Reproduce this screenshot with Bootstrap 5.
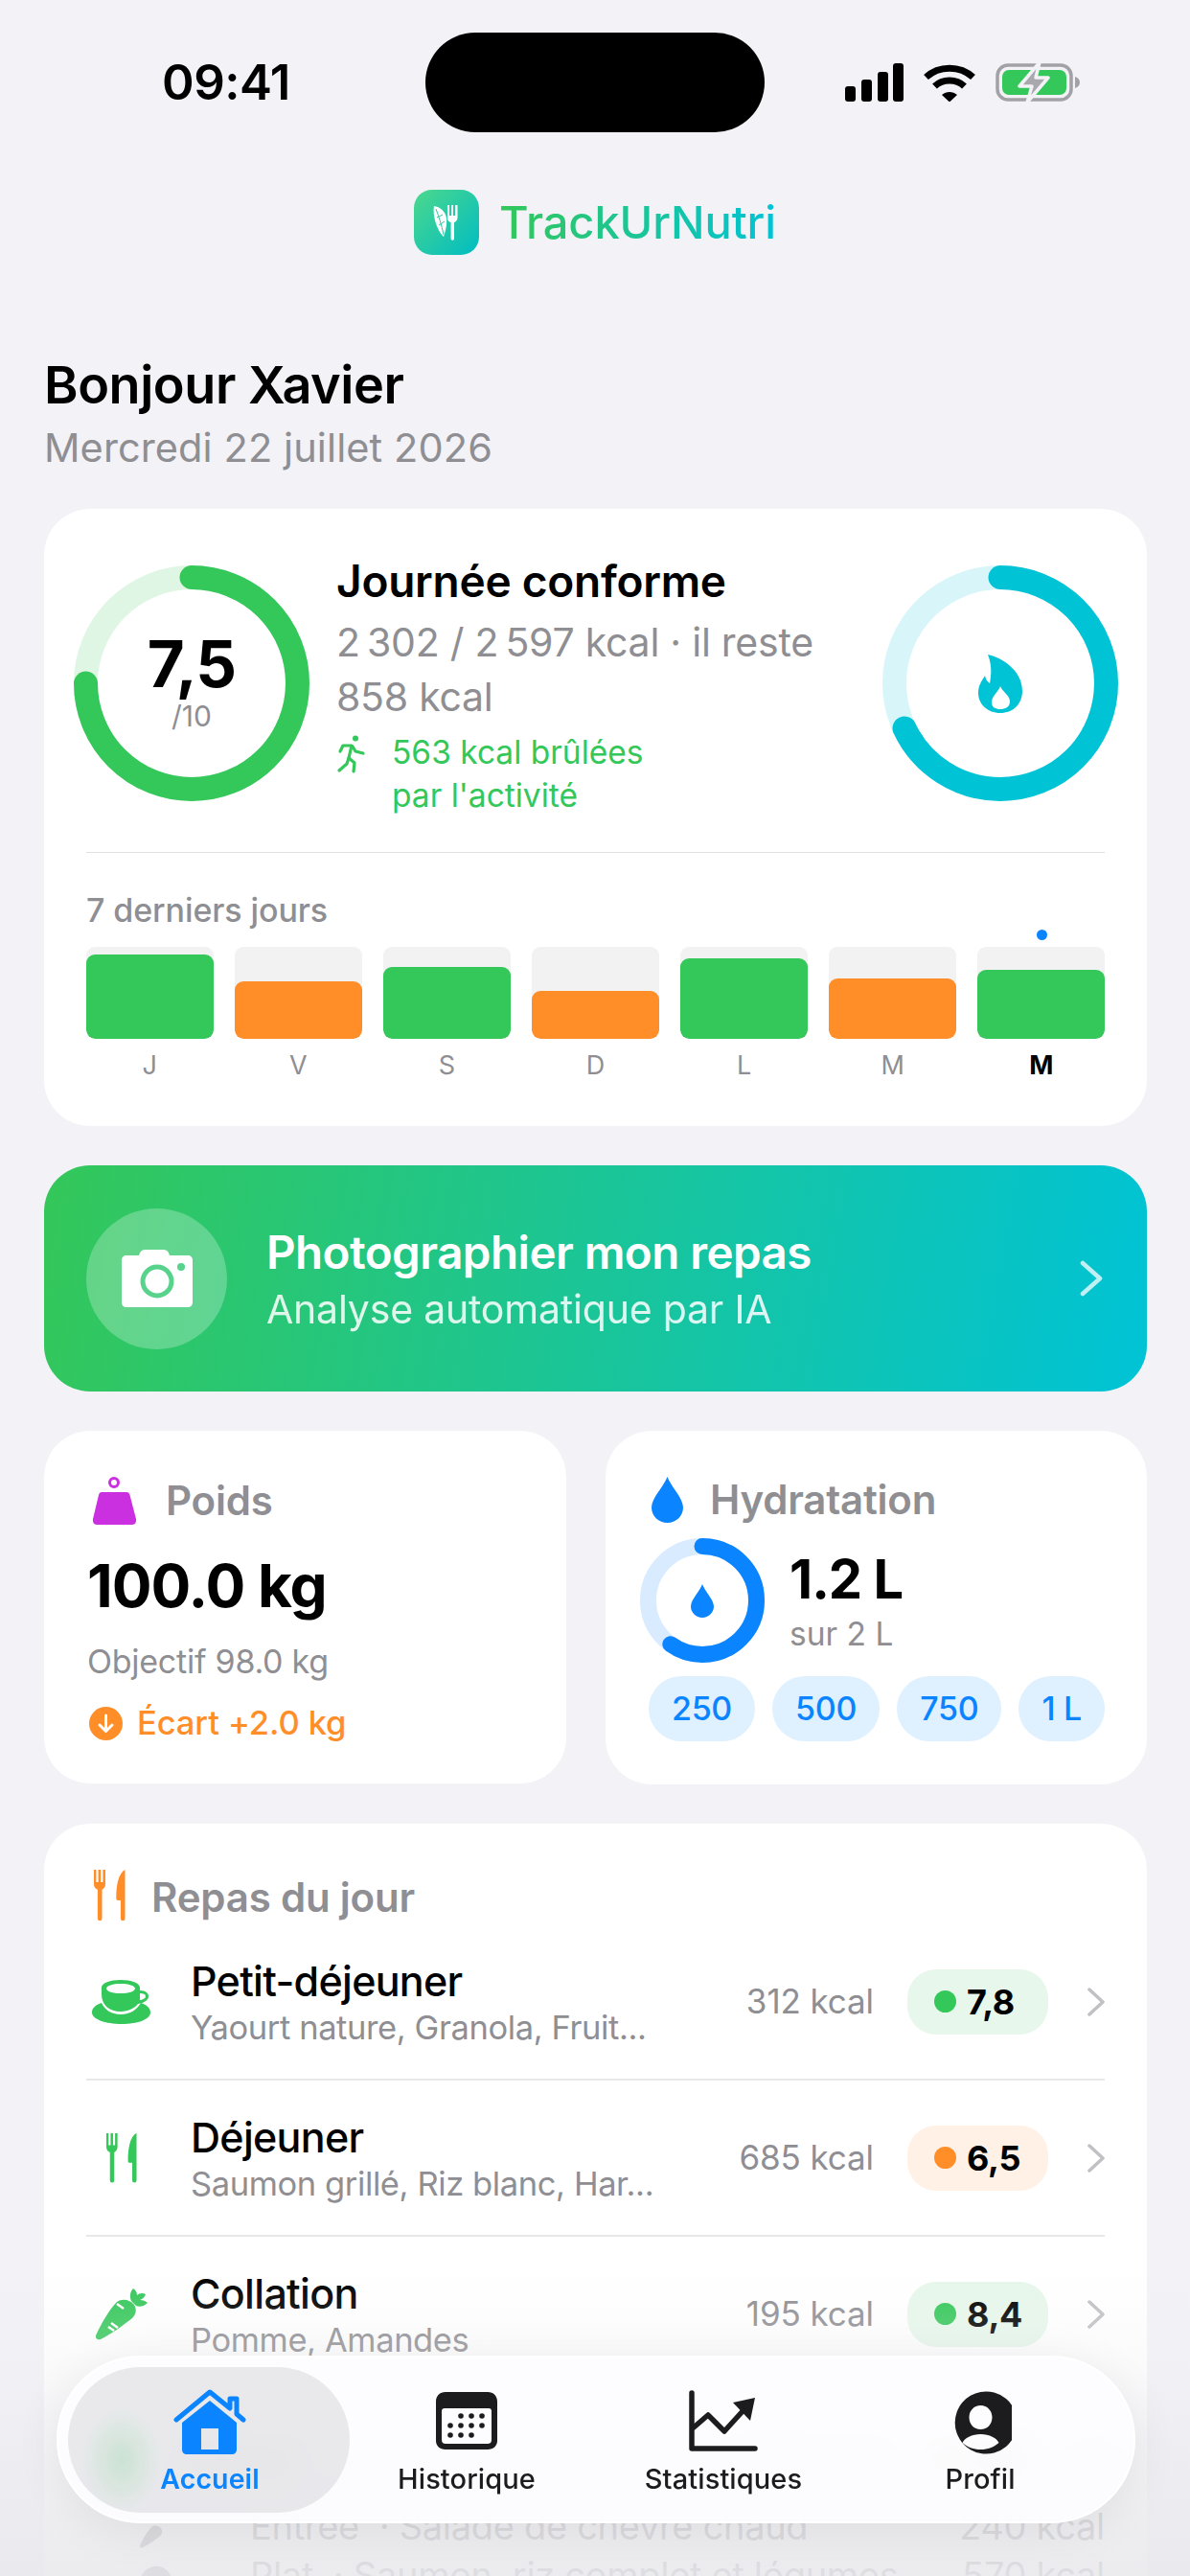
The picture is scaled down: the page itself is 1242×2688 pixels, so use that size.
<!DOCTYPE html>
<html lang="fr">
<head>
  <meta charset="UTF-8">
  <title>TrackUrNutri</title>
  <link href="https://cdn.jsdelivr.net/npm/bootstrap@5.3.0/dist/css/bootstrap.min.css" rel="stylesheet">
  <style>
    body { background: #f2f2f7; font-family: Inter, "Noto Sans", sans-serif; color: #000; margin: 0; }
    .screen { position: relative; width: 1242px; height: 2688px; overflow: hidden; background: #f2f2f7; }

    /* barre de statut */
    .statusbar { height: 138px; padding-top: 34px; }
    .clock { width: 444px; padding-left: 169px; font-size: 51px; font-weight: 600; line-height: 104px; letter-spacing: -.5px; }
    .island { width: 354px; height: 104px; background: #000; border-radius: 52px; }
    .status-icons { padding-left: 84px; gap: 21px; padding-top: 0; }

    .brand { margin-top: 60px; height: 68px; gap: 21px; }
    .brand-ico { width: 68px; height: 68px; border-radius: 19px; background: linear-gradient(135deg, #4cd88c, #00bcc2); }
    .brand-name { font-size: 47px; font-weight: 500; line-height: 68px; letter-spacing: -.1px;
      background: linear-gradient(90deg, #34c759, #00c3d6); -webkit-background-clip: text; background-clip: text; color: transparent; }

    .page { padding: 0 45px 0 46px; }
    .hello { margin-top: 103px; font-size: 54px; font-weight: 600; line-height: 66px; letter-spacing: -.45px; }
    .today { font-size: 41.500px; line-height: 56px; color: #8e8e93; margin-top: 4px; letter-spacing: .1px; }

    .tile { background: #fff; border: 0; border-radius: 48px; }

    /* carte du jour */
    .day-tile { margin-top: 36px; height: 644px; padding: 59px 30px 0 31px; }
    .day-head { height: 246px; }
    .day-text { margin-left: 28px; margin-top: -12px; }
    .day-title { font-size: 46px; font-weight: 600; line-height: 56px; letter-spacing: -.25px; }
    .day-sub { font-size: 41px; line-height: 57px; color: #8e8e93; margin-top: 8px; letter-spacing: -.25px; }
    .day-burn { color: #34c759; font-size: 33.500px; line-height: 45px; margin-top: 7px; gap: 26px; }
    .ring-num { font-size: 67px; font-weight: 700; line-height: 60px; letter-spacing: -1px; }
    .ring-den { font-size: 30px; line-height: 32px; color: #8e8e93; margin-top: 8px; }
    .ring-box { position: relative; width: 246px; height: 246px; flex: none; }
    .ring-mid { position: absolute; inset: 0; }
    .week { margin: 0 14px 0 13px; }
    .week-rule { height: 1px; background: #e0e0e3; margin-top: 53px; }
    .week-label { margin-top: 40px; font-size: 34px; font-weight: 500; line-height: 40px; color: #8e8e93; letter-spacing: -.1px; }
    .week-bars { margin-top: 18px; gap: 22.500px; }
    .day-col { position: relative; flex: 1 1 0; }
    .day-track { height: 96px; background: #f2f2f2; border-radius: 9px; overflow: hidden; }
    .day-fill { border-radius: 9px; }
    .fill-g { background: #34c759; }
    .fill-o { background: #ff8d28; }
    .day-letter { margin-top: 11px; font-size: 27px; line-height: 34px; color: #8e8e93; text-align: center; }
    .day-letter.now { color: #000; font-weight: 700; }
    .day-dot { position: absolute; top: -18px; left: 50%; margin-left: -5px; width: 11px; height: 11px; border-radius: 50%; background: #0a84ff; }

    /* bandeau photo */
    .snap { margin-top: 41px; height: 236px; border-radius: 48px; padding: 0 46px 0 44px; color: #fff;
      background: linear-gradient(100deg, #34c759 0%, #00c3d6 100%); }
    .snap-round { width: 147px; height: 147px; border-radius: 50%; background: rgba(255,255,255,.25); flex: none; }
    .snap-text { margin-left: 41px; }
    .snap-title { font-size: 47.500px; font-weight: 600; line-height: 58px; letter-spacing: -.55px; }
    .snap-sub { font-size: 41px; line-height: 50px; opacity: .85; margin-top: 5px; letter-spacing: -.2px; }

    /* poids + hydratation */
    .duo { margin-top: 41px; gap: 41px; }
    .weight-tile { width: 545px; height: 368px; padding: 48px 45px 0; }
    .water-tile { width: 565px; height: 369px; padding: 48px 44px 0 36px; }
    .tile-head { font-size: 42px; font-weight: 600; line-height: 48px; color: #8e8e93; letter-spacing: -.2px; }
    .weight-val { margin-top: 26px; font-size: 62px; font-weight: 700; line-height: 76px; letter-spacing: -1px; }
    .weight-goal { margin-top: 21px; font-size: 34px; line-height: 40px; color: #8e8e93; letter-spacing: -.25px; }
    .weight-gap { margin-top: 22px; font-size: 34.500px; font-weight: 500; line-height: 44px; color: #ff8d28; gap: 15px; letter-spacing: -.1px; }
    .water-ring { position: relative; width: 130px; height: 130px; flex: none; }
    .water-val { font-size: 56px; font-weight: 700; line-height: 66px; letter-spacing: -1px; }
    .water-of { font-size: 33.500px; line-height: 40px; color: #8e8e93; margin-top: 4px; }
    .chips { margin: 14px 0 0 9px; }
    .sip { height: 68px; padding: 0 24px; border-radius: 34px; background: #dff0ff; color: #0a84ff; font-size: 34px; font-weight: 500; line-height: 68px; letter-spacing: -.3px; }

    /* repas */
    .meals { margin-top: 41px; padding: 48px 44px 0; height: 900px; border-radius: 48px 48px 0 0; }
    .meals-head { height: 57px; }
    .meals-head .tile-head { margin-top: 5px; }
    .meal-row { height: 163px; border-bottom: 2px solid #e8e8ea; }
    .meal-row.last { border: 0; height: 117px; padding-top: 21px; }
    .meal-ico { width: 73px; margin-right: 36px; flex: none; }
    .meal-text { padding-top: 4px; }
    .meal-name { font-size: 43px; font-weight: 500; line-height: 50px; letter-spacing: -.7px; }
    .meal-items { font-size: 34.500px; line-height: 48px; color: #8e8e93; letter-spacing: -.4px; }
    .meal-kcal { margin-left: auto; font-size: 35px; color: #8e8e93; letter-spacing: -.1px; white-space: nowrap; }
    .score { width: 147px; height: 68px; margin-left: 35px; padding-left: 28px; gap: 11px; border-radius: 30px; font-size: 36px; font-weight: 700; letter-spacing: -.3px; flex: none; }
    .score-g { background: #e7f7eb; }
    .score-o { background: #fff1e6; }
    .score i { width: 23px; height: 23px; border-radius: 50%; display: block; }
    .score-g i { background: #34c759; }
    .score-o i { background: #ff8d28; }
    .go { margin-left: 41px; flex: none; }
    .sub-meal { margin-left: 56px; margin-top: -1px; font-size: 38px; line-height: 52px; color: #8e8e93; letter-spacing: -.3px; }
    .sub-meal.first { margin-top: -4px; }
    .sub-ico { width: 115px; flex: none; }

    /* fondu + barre d'onglets */
    .fade-bottom { position: absolute; left: 0; right: 0; top: 2370px; bottom: 0; z-index: 1; pointer-events: none;
      background: linear-gradient(180deg, rgba(240,240,243,0) 0%, rgba(240,240,243,.22) 24%, rgba(234,234,238,.8) 80%, rgba(233,233,237,.88) 100%); }
    .tabbar { position: absolute; z-index: 2; left: 59px; top: 2458px; width: 1126px; height: 175px; padding: 0 0 0 24px; border-radius: 88px;
      background: rgba(253,253,255,.92); border: 2px solid rgba(255,255,255,.9); box-shadow: 0 8px 50px rgba(0,0,0,.07);
      -webkit-backdrop-filter: blur(14px); backdrop-filter: blur(14px); }
    .tab { position: relative; width: 268px; height: 100%; font-size: 29px; font-weight: 500; color: #1c1c1e; letter-spacing: .1px; }
    .tab .tab-ico { height: 70px; margin-top: 33px; z-index: 1; position: relative; }
    .tab .tab-txt { line-height: 34px; margin-top: 7px; z-index: 1; position: relative; }
    .tab.on { color: #0a84ff; font-weight: 600; font-size: 28.500px; }
    .tab.on::before { content: ""; position: absolute; left: -14px; right: -12px; top: 10px; height: 152px; border-radius: 76px;
      background: radial-gradient(ellipse 42px 56px at 19% 64%, rgba(52,199,89,.16), rgba(52,199,89,0) 100%), rgba(120,120,128,.15); }
  </style>
</head>
<body>
<svg width="0" height="0" class="position-absolute">
  <symbol id="cutlery" viewBox="0 0 34 54">
    <path d="M1 0h2.400v13H5.600V0h2.600v13h2.200V0H13v15c0 3.200-1.800 5-3.500 5.800V51a2.300 2.300 0 0 1-4.600 0V20.800C2.800 20 1 18.200 1 15Z"/>
    <path d="M33.500 0v51a2.300 2.300 0 0 1-4.600 0V32h-2.600c-1.300 0-2-.8-2-2C24.300 16 26.500 4 33.500 0Z"/>
  </symbol>
</svg>

<div class="screen">
  <div class="statusbar d-flex">
    <div class="clock">09:41</div>
    <div class="island"></div>
    <div class="status-icons d-flex align-items-center">
      <svg width="61" height="40" viewBox="0 0 61 40"><rect x="0" y="24" width="11" height="16" rx="3"/><rect x="17" y="17" width="11" height="23" rx="3"/><rect x="34" y="9" width="11" height="31" rx="3"/><rect x="50" y="0" width="11" height="40" rx="3"/></svg>
      <svg width="54" height="40" viewBox="0 0 54 40" fill="none" stroke="#000" stroke-width="7"><path d="M2.500 14.500C16 2 38 2 51.500 14.500"/><path d="M11.500 24C20 16 34 16 42.500 24"/><path d="M19 33c4.500-4 11.500-4 16 0l-8 7.500Z" fill="#000" stroke="none"/></svg>
      <svg width="88" height="44" viewBox="0 0 88 44"><rect x="2" y="4" width="77" height="36" rx="11" fill="none" stroke="#a1a1a6" stroke-width="3.500"/><rect x="7" y="9" width="67" height="26" rx="7" fill="#34c759"/><path d="M83 16c3 1 5 3 5 6s-2 5-5 6Z" fill="#a1a1a6"/><path d="M46 1 25 26h13l-5 17 22-26H42Z" fill="#a8a8ad" stroke="#f2f2f7" stroke-width="3.500" stroke-linejoin="round"/></svg>
    </div>
  </div>

  <div class="brand d-flex justify-content-center align-items-center">
    <div class="brand-ico d-flex align-items-center justify-content-center">
      <svg width="28" height="38" viewBox="0 0 28 38"><path d="M1 2c6 1 12 5 13 13 .6 7-1 13-3 19C5 29-1 13 1 2Z" fill="#fff"/><path d="M3 5c3 8 6 17 8 27M4 14l6-3M6 22l6-4" stroke="#2ec9a2" stroke-width="1" fill="none"/><path d="M15 1h2v11h2V1h2v11h2V1h2.500v13c0 3-2 4.500-3.500 5v17a1.700 1.700 0 0 1-3.400 0V19C16.500 18.500 15 17 15 14Z" fill="#fff"/></svg>
    </div>
    <div class="brand-name">TrackUrNutri</div>
  </div>

  <div class="page">
    <div class="hello">Bonjour Xavier</div>
    <div class="today">Mercredi 22 juillet 2026</div>

    <div class="tile day-tile">
      <div class="day-head d-flex">
        <div class="ring-box">
          <svg width="246" height="246" viewBox="0 0 246 246" fill="none" stroke-width="25"><circle cx="123" cy="123" r="110.500" stroke="#e0f6e5"/><circle cx="123" cy="123" r="110.500" stroke="#34c759" stroke-linecap="round" pathLength="100" stroke-dasharray="75 100" transform="rotate(-90 123 123)"/></svg>
          <div class="ring-mid d-flex flex-column align-items-center justify-content-center">
            <div class="ring-num">7,5</div>
            <div class="ring-den">/10</div>
          </div>
        </div>
        <div class="day-text flex-grow-1">
          <div class="day-title">Journée conforme</div>
          <div class="day-sub">2&#8239;302 / 2&#8239;597 kcal · il reste<br>858 kcal</div>
          <div class="day-burn d-flex">
            <svg width="32" height="40" viewBox="0 0 32 40" class="mt-1" fill="none" stroke="#34c759" stroke-width="3.200" stroke-linecap="round" stroke-linejoin="round"><circle cx="20" cy="3.500" r="3" fill="#34c759" stroke="none"/><path d="M4 17l3-6h9l-3 13 6 5-1 9"/><path d="M13 24l-2 6-8 7"/><path d="M17 12l3 5 8 2"/></svg>
            <div>563 kcal brûlées<br>par l'activité</div>
          </div>
        </div>
        <div class="ring-box">
          <svg width="246" height="246" viewBox="0 0 246 246" fill="none" stroke-width="25"><circle cx="123" cy="123" r="110.500" stroke="#d8f6f9"/><circle cx="123" cy="123" r="110.500" stroke="#00c3d6" stroke-linecap="round" pathLength="100" stroke-dasharray="68 100" transform="rotate(-90 123 123)"/></svg>
          <div class="ring-mid d-flex align-items-center justify-content-center">
            <svg width="46" height="61" viewBox="0 0 46 61"><path d="M10 0c14 3 36 16 36 38 0 14-10 23-23 23S0 52 0 40c0-8 4-13 7-18 1 4 2 6 5 8 2-10 2-20-2-30Z" fill="#00c3d6"/><path d="M23 33c-2 6-9 10-9 17 0 5 4 7 9 7s10-2 10-8c0-7-8-10-10-16Z" fill="#fff"/></svg>
          </div>
        </div>
      </div>

      <div class="week">
        <div class="week-rule"></div>
        <div class="week-label">7 derniers jours</div>
        <div class="week-bars d-flex" id="weekBars"></div>
      </div>
    </div>

    <div class="snap d-flex align-items-center">
      <div class="snap-round d-flex align-items-center justify-content-center">
        <svg width="74" height="60" viewBox="0 0 74 60"><path d="M24 0h20c3 0 5 2 6 6h19c3 0 5 2 5 5v44c0 3-2 5-5 5H5c-3 0-5-2-5-5V11c0-3 2-5 5-5h13c1-4 3-6 6-6Z" fill="#fff"/><circle cx="37" cy="33" r="15" fill="none" stroke="#57d38c" stroke-width="5"/><circle cx="62" cy="18" r="4" fill="#57d38c"/></svg>
      </div>
      <div class="snap-text flex-grow-1">
        <div class="snap-title">Photographier mon repas</div>
        <div class="snap-sub">Analyse automatique par IA</div>
      </div>
      <svg width="24" height="38" viewBox="0 0 24 38" fill="none" stroke="#fff" stroke-opacity=".75" stroke-width="4.500" stroke-linecap="round" stroke-linejoin="round"><path d="M3 3l18 16L3 35"/></svg>
    </div>

    <div class="duo d-flex">
      <div class="tile weight-tile">
        <div class="tile-head d-flex align-items-center">
          <svg width="48" height="50" viewBox="0 0 48 50" style="margin-left:5px;margin-right:29px"><circle cx="23" cy="6" r="4.500" fill="none" stroke="#cb30e0" stroke-width="3"/><path d="M10 16h26c2 0 3 1 3.500 3L46 44c.5 3-1 6-4 6H5c-3 0-4.500-3-4-6l6-25c.5-2 1.500-3 3-3Z" fill="#cb30e0"/></svg>
          Poids
        </div>
        <div class="weight-val">100.0 kg</div>
        <div class="weight-goal">Objectif 98.0 kg</div>
        <div class="weight-gap d-flex align-items-center">
          <svg width="35" height="35" viewBox="0 0 35 35" style="margin-left:2px"><circle cx="17.500" cy="17.500" r="17.500" fill="#ff8d28"/><path d="M17.500 9v16M11 19l6.500 6.500L24 19" fill="none" stroke="#fff" stroke-width="3" stroke-linecap="round" stroke-linejoin="round"/></svg>
          Écart +2.0 kg
        </div>
      </div>

      <div class="tile water-tile">
        <div class="tile-head d-flex align-items-center">
          <svg width="33" height="48" viewBox="0 0 33 48" style="margin-left:12px;margin-right:28px"><path d="M16.500 0C20 10 33 22 33 32c0 9-7.500 16-16.500 16S0 41 0 32C0 22 13 10 16.500 0Z" fill="#0a84ff"/></svg>
          Hydratation
        </div>
        <div class="d-flex align-items-center" style="margin-top:16px">
          <div class="water-ring">
            <svg width="130" height="130" viewBox="0 0 130 130" fill="none" stroke-width="17"><circle cx="65" cy="65" r="56.500" stroke="#d9ebff"/><circle cx="65" cy="65" r="56.500" stroke="#0a84ff" stroke-linecap="round" pathLength="100" stroke-dasharray="60 100" transform="rotate(-90 65 65)"/></svg>
            <div class="ring-mid d-flex align-items-center justify-content-center">
              <svg width="24" height="35" viewBox="0 0 33 48"><path d="M16.500 0C20 10 33 22 33 32c0 9-7.500 16-16.500 16S0 41 0 32C0 22 13 10 16.500 0Z" fill="#0a84ff"/></svg>
            </div>
          </div>
          <div style="margin-left:26px">
            <div class="water-val">1.2 L</div>
            <div class="water-of">sur 2 L</div>
          </div>
        </div>
        <div class="chips d-flex justify-content-between">
          <div class="sip">250</div><div class="sip">500</div><div class="sip">750</div><div class="sip">1 L</div>
        </div>
      </div>
    </div>

    <div class="tile meals">
      <div class="meals-head d-flex">
        <svg width="36" height="54" viewBox="0 0 34 54" fill="#ff8d28" style="margin-left:6px;margin-right:26px"><use href="#cutlery"/></svg>
        <div class="tile-head">Repas du jour</div>
      </div>

      <div class="meal-row d-flex align-items-center">
        <div class="meal-ico d-flex justify-content-center">
          <svg width="61" height="46" viewBox="0 0 61 46" fill="#34c759"><path d="M10 24c3 7 10 12 20 12s17-5 21-12c6 2 10 5 10 10 0 7-13 12-30 12S0 41 0 34c0-5 4-8 10-10Z"/><path fill-rule="evenodd" d="M10 8c0-5 9-8 20-8s20 3 20 8v3c6 0 9 3 9 6s-3 7-11 8c-3 4-10 8-18 8-12 0-20-7-20-18Zm5 1c0 3 7 5 15 5s15-2 15-5-7-5-15-5-15 2-15 5Zm35 5v7c4-.5 6-2 6-4s-2-3-6-3Z"/></svg>
        </div>
        <div class="meal-text">
          <div class="meal-name">Petit-déjeuner</div>
          <div class="meal-items">Yaourt nature, Granola, Fruit...</div>
        </div>
        <div class="meal-kcal">312 kcal</div>
        <div class="score score-g d-flex align-items-center"><i></i>7,8</div>
        <svg class="go" width="18" height="30" viewBox="0 0 18 30" fill="none" stroke="#c0c0c5" stroke-width="3.500" stroke-linecap="round" stroke-linejoin="round"><path d="M2 2l14 13L2 28"/></svg>
      </div>

      <div class="meal-row d-flex align-items-center">
        <div class="meal-ico d-flex justify-content-center">
          <svg width="33" height="54" viewBox="0 0 34 54" fill="#34c759"><use href="#cutlery"/></svg>
        </div>
        <div class="meal-text">
          <div class="meal-name">Déjeuner</div>
          <div class="meal-items">Saumon grillé, Riz blanc, Har...</div>
        </div>
        <div class="meal-kcal">685 kcal</div>
        <div class="score score-o d-flex align-items-center"><i></i>6,5</div>
        <svg class="go" width="18" height="30" viewBox="0 0 18 30" fill="none" stroke="#c0c0c5" stroke-width="3.500" stroke-linecap="round" stroke-linejoin="round"><path d="M2 2l14 13L2 28"/></svg>
      </div>

      <div class="meal-row d-flex align-items-center">
        <div class="meal-ico d-flex justify-content-center">
          <svg width="54" height="54" viewBox="0 0 54 54"><path d="M0 49C6 36 14 22 22 14c6-4 14-2 18 3 3 5 2 10-2 14C28 39 15 48 5 53c-3 1-6-1-5-4Z" fill="#34c759"/><path d="M37 13c-2-5-1-10 2-13 3 2 4 4 4 7 2-2 6-3 9-1-1 3-3 5-6 6 3 0 6 1 8 3-3 3-8 5-12 3Z" fill="#34c759"/><path d="M22 16l7 5M13 40l6 4M16 36l7 5" stroke="#fff" stroke-width="2.500" fill="none"/></svg>
        </div>
        <div class="meal-text">
          <div class="meal-name">Collation</div>
          <div class="meal-items">Pomme, Amandes</div>
        </div>
        <div class="meal-kcal">195 kcal</div>
        <div class="score score-g d-flex align-items-center"><i></i>8,4</div>
        <svg class="go" width="18" height="30" viewBox="0 0 18 30" fill="none" stroke="#c0c0c5" stroke-width="3.500" stroke-linecap="round" stroke-linejoin="round"><path d="M2 2l14 13L2 28"/></svg>
      </div>

      <div class="meal-row last d-flex align-items-center">
        <div class="meal-ico d-flex justify-content-center">
          <svg width="33" height="54" viewBox="0 0 34 54" fill="#34c759"><use href="#cutlery"/></svg>
        </div>
        <div class="meal-name">Dîner</div>
        <div class="meal-kcal">1 110 kcal</div>
        <div class="score score-o d-flex align-items-center"><i></i>6,8</div>
        <svg class="go" width="18" height="30" viewBox="0 0 18 30" fill="none" stroke="#c0c0c5" stroke-width="3.500" stroke-linecap="round" stroke-linejoin="round"><path d="M2 2l14 13L2 28"/></svg>
      </div>
      <div class="sub-meal first d-flex">
        <div class="sub-ico"><svg width="30" height="36" viewBox="0 0 54 54" class="mt-2"><path d="M0 49C6 36 14 22 22 14c6-4 14-2 18 3 3 5 2 10-2 14C28 39 15 48 5 53c-3 1-6-1-5-4Z" fill="#8e8e93"/></svg></div>
        <span>Entrée &nbsp;· Salade de chèvre chaud</span><span class="ms-auto">240 kcal</span>
      </div>
      <div class="sub-meal d-flex">
        <div class="sub-ico"><svg width="34" height="34" viewBox="0 0 34 34" class="mt-2"><circle cx="17" cy="17" r="17" fill="#8e8e93"/></svg></div>
        <span>Plat &nbsp;· Saumon, riz complet et légumes</span><span class="ms-auto">570 kcal</span>
      </div>
    </div>
  </div>

  <div class="fade-bottom"></div>

  <div class="tabbar d-flex">
    <div class="tab on d-flex flex-column align-items-center">
      <svg class="tab-ico" width="76" height="70" viewBox="0 0 76 70" fill="#0a84ff"><path d="M3 32 38 3l21 17V10h7v16l7 6" fill="none" stroke="#0a84ff" stroke-width="5" stroke-linecap="round" stroke-linejoin="round"/><path fill-rule="evenodd" d="M38 12 66 35v28c0 3-2 5-5 5H14c-3 0-5-2-5-5V35Zm-9 29v22h18V41Z"/></svg>
      <div class="tab-txt">Accueil</div>
    </div>
    <div class="tab d-flex flex-column align-items-center">
      <svg class="tab-ico" width="64" height="70" viewBox="0 0 64 70" fill="#1c1c1e"><path fill-rule="evenodd" d="M10 3h44c6 0 10 4 10 10v41c0 5-4 9-10 9H10C4 63 0 59 0 54V13C0 7 4 3 10 3Zm-1 17c-2 0-3 1-3 3v30c0 3 2 4 4 4h44c2 0 4-1 4-4V23c0-2-1-3-3-3Z"/><g><circle cx="26" cy="28" r="2.800"/><circle cx="37" cy="28" r="2.800"/><circle cx="48" cy="28" r="2.800"/><circle cx="15" cy="38" r="2.800"/><circle cx="26" cy="38" r="2.800"/><circle cx="37" cy="38" r="2.800"/><circle cx="48" cy="38" r="2.800"/><circle cx="15" cy="48" r="2.800"/><circle cx="26" cy="48" r="2.800"/><circle cx="37" cy="48" r="2.800"/></g></svg>
      <div class="tab-txt">Historique</div>
    </div>
    <div class="tab d-flex flex-column align-items-center">
      <svg class="tab-ico" width="72" height="70" viewBox="0 0 72 70" fill="none" stroke="#1c1c1e" stroke-width="5.500" stroke-linecap="round" stroke-linejoin="round"><path d="M3 4v58h66"/><path d="M5 40 20 27l17 17 20-22"/><path d="M46 14 69 9l-5 24Z" fill="#1c1c1e" stroke="none"/></svg>
      <div class="tab-txt">Statistiques</div>
    </div>
    <div class="tab d-flex flex-column align-items-center">
      <svg class="tab-ico" width="65" height="70" viewBox="0 0 65 70" fill="#1c1c1e"><path fill-rule="evenodd" d="M32.500 3A32.500 32.500 0 1 1 32.500 67 32.500 32.500 0 0 1 32.500 3Zm0 14c-7 0-12 5.500-12 12.500S25.500 42 32.500 42 44.500 36.500 44.500 29.500 39.500 17 32.500 17Zm0 30c-9 0-17 4-19 9 5 4.500 11.500 7 19 7s14-2.500 19-7c-2-5-10-9-19-9Z"/></svg>
      <div class="tab-txt">Profil</div>
    </div>
  </div>
</div>

<script>
  // Barres des 7 derniers jours
  const jours = [
    { l: "J", h: 88, c: "fill-g" }, { l: "V", h: 60, c: "fill-o" }, { l: "S", h: 75, c: "fill-g" },
    { l: "D", h: 50, c: "fill-o" }, { l: "L", h: 84, c: "fill-g" }, { l: "M", h: 63, c: "fill-o" },
    { l: "M", h: 72, c: "fill-g", now: true }
  ];
  document.getElementById("weekBars").innerHTML = jours.map(j => `
    <div class="day-col">
      ${j.now ? '<div class="day-dot"></div>' : ''}
      <div class="day-track d-flex align-items-end"><div class="day-fill w-100 ${j.c}" style="height:${j.h}px"></div></div>
      <div class="day-letter ${j.now ? 'now' : ''}">${j.l}</div>
    </div>`).join("");
</script>
<script src="https://cdn.jsdelivr.net/npm/bootstrap@5.3.0/dist/js/bootstrap.bundle.min.js"></script>
</body>
</html>
